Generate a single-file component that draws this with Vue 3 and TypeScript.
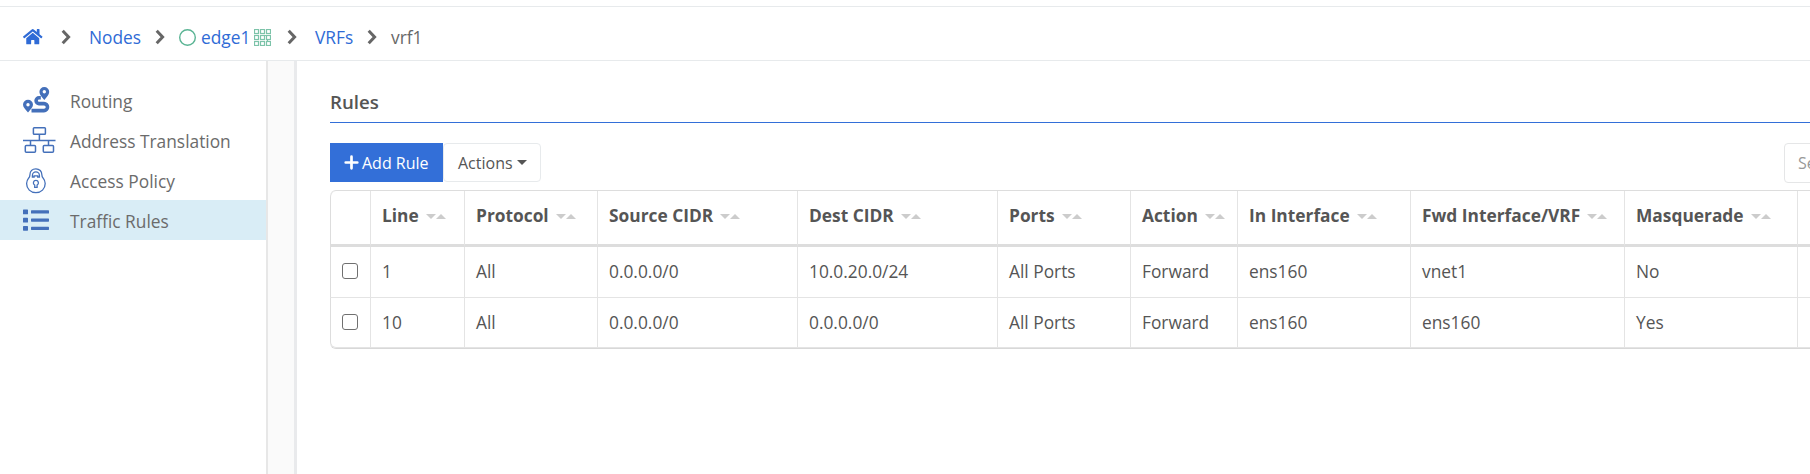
<script setup lang="ts">
interface Rule {
  line: number
  protocol: string
  source: string
  dest: string
  ports: string
  action: string
  inIface: string
  fwd: string
  masq: string
}

const columns: { label: string; cls: string }[] = [
  { label: 'Line', cls: 'w-line' },
  { label: 'Protocol', cls: 'w-protocol' },
  { label: 'Source CIDR', cls: 'w-cidr' },
  { label: 'Dest CIDR', cls: 'w-cidr' },
  { label: 'Ports', cls: 'w-protocol' },
  { label: 'Action', cls: 'w-action' },
  { label: 'In Interface', cls: 'w-iface' },
  { label: 'Fwd Interface/VRF', cls: 'w-fwd' },
  { label: 'Masquerade', cls: 'w-iface' },
]

const rules: Rule[] = [
  { line: 1, protocol: 'All', source: '0.0.0.0/0', dest: '10.0.20.0/24', ports: 'All Ports', action: 'Forward', inIface: 'ens160', fwd: 'vnet1', masq: 'No' },
  { line: 10, protocol: 'All', source: '0.0.0.0/0', dest: '0.0.0.0/0', ports: 'All Ports', action: 'Forward', inIface: 'ens160', fwd: 'ens160', masq: 'Yes' },
]

const menu: { label: string; icon: string; active?: boolean }[] = [
  { label: 'Routing', icon: 'route' },
  { label: 'Address Translation', icon: 'network' },
  { label: 'Access Policy', icon: 'lock' },
  { label: 'Traffic Rules', icon: 'list', active: true },
]

const cells = [0.5, 6.5, 12.5]
</script>

<template>
  <div class="page">
    <nav class="crumbs">
      <a class="crumb home">
        <svg width="19.5" height="17.33" viewBox="0 0 576 512"><path fill="currentColor" d="M280.37 148.26L96 300.11V464a16 16 0 0 0 16 16l112.06-.29a16 16 0 0 0 15.92-16V368a16 16 0 0 1 16-16h64a16 16 0 0 1 16 16v95.64a16 16 0 0 0 16 16.05L464 480a16 16 0 0 0 16-16V300L295.67 148.26a12.19 12.19 0 0 0-15.3 0zM571.6 251.47L488 182.56V44.05a12 12 0 0 0-12-12h-56a12 12 0 0 0-12 12v72.61L318.47 43a48 48 0 0 0-61 0L4.34 251.47a12 12 0 0 0-1.6 16.9l25.5 31A12 12 0 0 0 45.15 301l235.22-193.74a12.19 12.19 0 0 1 15.3 0L530.9 301a12 12 0 0 0 16.9-1.6l25.5-31a12 12 0 0 0-1.7-16.93z" /></svg>
      </a>
      <svg class="chev" viewBox="0 0 10 16"><path d="M1.7 1.8 L7.6 8 L1.7 14.2" /></svg>
      <a class="crumb nodes">Nodes</a>
      <svg class="chev" viewBox="0 0 10 16"><path d="M1.7 1.8 L7.6 8 L1.7 14.2" /></svg>
      <a class="crumb edge">
        <svg class="ring" width="17" height="17" viewBox="0 0 17 17"><circle cx="8.5" cy="8.5" r="7.8" /></svg>
        <span>edge1</span>
        <svg class="matrix" width="17" height="17" viewBox="0 0 17 17">
          <template v-for="y in cells" :key="y">
            <rect v-for="x in cells" :key="x" :x="x" :y="y" width="4" height="4" />
          </template>
          <path d="M11 6.5h2M13.5 11v2" />
        </svg>
      </a>
      <svg class="chev" viewBox="0 0 10 16"><path d="M1.7 1.8 L7.6 8 L1.7 14.2" /></svg>
      <a class="crumb vrfs">VRFs</a>
      <svg class="chev" viewBox="0 0 10 16"><path d="M1.7 1.8 L7.6 8 L1.7 14.2" /></svg>
      <span class="crumb current">vrf1</span>
    </nav>

    <div class="body">
      <aside class="side">
        <a v-for="m in menu" :key="m.label" class="item" :class="{ active: m.active }">
          <span class="icon">
            <svg v-if="m.icon === 'route'" width="27" height="28" viewBox="0 0 27 28">
              <path fill="currentColor" fill-rule="evenodd" d="M21.3 1a4.9 4.9 0 0 1 4.9 4.9c0 2.6-2.7 5.2-4.9 8-2.2-2.8-4.9-5.4-4.9-8A4.9 4.9 0 0 1 21.3 1zm0 3.1a1.7 1.7 0 1 0 0 3.4 1.7 1.7 0 0 0 0-3.4z" />
              <path fill="currentColor" fill-rule="evenodd" d="M5 13.8a5 5 0 0 1 5 5c0 2.600-2.800 5-5 7.600-2.200-2.600-5-5-5-7.600a5 5 0 0 1 5-5zm0 3.200a1.700 1.700 0 1 0 0 3.400 1.700 1.700 0 0 0 0-3.400z" />
              <path fill="none" stroke="currentColor" stroke-width="3.600" d="M17.800 11.800h-1.800a2.900 2.900 0 0 0 0 5.800h5a3.500 3.500 0 0 1 0 7H8.500" />
            </svg>
            <svg v-else-if="m.icon === 'network'" width="33" height="28" viewBox="0 0 33 28" fill="none" stroke="currentColor" stroke-width="1.5">
              <rect x="10.400" y="1.800" width="12" height="6.500" rx=".8" />
              <path d="M16.400 8.300v6.200M0 14.500h32.500M7.500 14.500v5M25.500 14.500v5" />
              <rect x="2.300" y="19.500" width="10.200" height="6.700" rx="1" />
              <rect x="20.300" y="19.500" width="10.200" height="6.700" rx="1" />
            </svg>
            <svg v-else-if="m.icon === 'lock'" width="27" height="28" viewBox="0 0 27 28" fill="none" stroke="currentColor" stroke-width="1.300">
              <g transform="translate(0 1)">
                <path d="M12.900 1.800c-3.600 0-6 2.600-6 6.200 0 1.400-.4 2.300-1.300 3.200a9.300 9.300 0 0 0-2 5.300c0 5.400 4 9.200 9.300 9.200s9.300-3.800 9.300-9.200a9.300 9.300 0 0 0-2-5.300c-.9-.9-1.300-1.800-1.300-3.200 0-3.600-2.400-6.200-6-6.200z" />
                <path d="M9.400 10V8.400a3.500 3.500 0 0 1 7 0V10H14.700V8.900h-3.600V10z" />
                <path d="M12.900 13.400a2.500 2.500 0 0 0-1.200 4.700v2.300h2.400v-2.300a2.500 2.500 0 0 0-1.200-4.700z" />
              </g>
            </svg>
            <svg v-else width="27" height="28" viewBox="0 0 27 28" fill="currentColor">
              <rect y="3.500" width="5" height="4.800" rx=".6" /><rect y="11.700" width="5" height="4.800" rx=".6" /><rect y="19.900" width="5" height="4.800" rx=".6" />
              <rect x="8" y="4.300" width="18" height="3.200" rx=".6" /><rect x="8" y="12.500" width="18" height="3.200" rx=".6" /><rect x="8" y="20.700" width="18" height="3.200" rx=".6" />
            </svg>
          </span>
          <span class="label">{{ m.label }}</span>
        </a>
      </aside>
      <div class="gutter"></div>

      <main class="main">
        <h2 class="title">Rules</h2>
        <div class="toolbar">
          <button class="btn primary">
            <svg width="15" height="15" viewBox="0 0 15 15"><path d="M7.500 1.700v11.600M1.700 7.500h11.600" stroke="currentColor" stroke-width="2.700" stroke-linecap="round" /></svg>
            <span>Add Rule</span>
          </button>
          <button class="btn plain"><span>Actions</span><i class="caret"></i></button>
          <input class="search" type="text" placeholder="Search" />
        </div>

        <table class="grid">
          <colgroup>
            <col class="w-check" />
            <col v-for="c in columns" :key="c.label" :class="c.cls" />
            <col class="w-cidr" />
          </colgroup>
          <thead>
            <tr>
              <th></th>
              <th v-for="c in columns" :key="c.label">
                <div class="head"><span>{{ c.label }}</span><i class="down"></i><i class="up"></i></div>
              </th>
              <th></th>
            </tr>
          </thead>
          <tbody>
            <tr v-for="r in rules" :key="r.line">
              <td class="pick"><span class="box" role="checkbox"></span></td>
              <td>{{ r.line }}</td>
              <td>{{ r.protocol }}</td>
              <td>{{ r.source }}</td>
              <td>{{ r.dest }}</td>
              <td>{{ r.ports }}</td>
              <td>{{ r.action }}</td>
              <td>{{ r.inIface }}</td>
              <td>{{ r.fwd }}</td>
              <td>{{ r.masq }}</td>
              <td></td>
            </tr>
          </tbody>
        </table>
      </main>
    </div>
  </div>
</template>

<style>
body {
  margin: 0;
  background: #fff;
  overflow: hidden;
}
</style>

<style scoped>
.page {
  box-sizing: border-box;
  width: 1810px;
  height: 474px;
  padding-top: 6px;
  overflow: hidden;
  display: flex;
  flex-direction: column;
  font-family: "Open Sans", "Noto Sans", sans-serif;
  font-size: 17.33px;
  line-height: 24px;
  color: #555;
}
.crumbs {
  box-sizing: border-box;
  height: 55px;
  flex: none;
  border-top: 1px solid #e7eaec;
  border-bottom: 1px solid #e7eaec;
  display: flex;
  align-items: center;
  padding: 7px 0 0 23px;
  white-space: nowrap;
}
.crumb {
  flex: none;
  color: #2f6bd6;
}
.home { width: 38px; display: flex; }
.nodes { width: 66px; }
.edge { width: 108px; display: flex; align-items: center; }
.vrfs { width: 52px; }
.current { color: #676767; }
.chev {
  flex: none;
  width: 10px;
  height: 16px;
  margin-right: 18px;
  fill: none;
  stroke: #666;
  stroke-width: 3;
}
.nodes + .chev { margin-right: 14px; }
.edge + .chev { margin-right: 18px; }
.vrfs + .chev { margin-right: 14px; }
.ring {
  margin-right: 5px;
  fill: none;
  stroke: #5ab494;
  stroke-width: 1.4;
}
.matrix {
  margin-left: 4px;
  fill: none;
  stroke: #7cc3a9;
  stroke-width: 1.2;
}
.body {
  flex: 1;
  display: flex;
  min-height: 0;
}
.side {
  width: 266px;
  flex: none;
  padding-top: 19px;
}
.item {
  height: 40px;
  display: flex;
  align-items: center;
  padding-left: 23px;
  color: #6b6b6b;
}
.item.active { background: #d9edf6; }
.label { padding-top: 2px; }
.icon {
  width: 47px;
  height: 28px;
  flex: none;
  color: #4470ba;
}
.icon svg { display: block; }
.gutter {
  box-sizing: border-box;
  width: 31px;
  flex: none;
  background: #fafafa;
  border-left: 2px solid #e7e7e7;
  border-right: 3px solid #e9eaec;
}
.main {
  flex: 1;
  min-width: 0;
  padding-left: 33px;
  overflow: hidden;
}
.title {
  box-sizing: border-box;
  height: 62px;
  margin: 0;
  padding-top: 29px;
  border-bottom: 1px solid #336fd8;
  font-size: 18.67px;
  font-weight: 600;
}
.toolbar {
  display: flex;
  height: 39px;
  margin-top: 20px;
}
.btn {
  box-sizing: border-box;
  flex: none;
  height: 39px;
  margin: 0;
  padding: 0;
  display: flex;
  align-items: center;
  font: inherit;
  font-size: 16px;
  white-space: nowrap;
}
.primary {
  width: 113px;
  border: 0;
  padding-left: 14px;
  gap: 3px;
  background: #336fd8;
  color: #fff;
}
.plain {
  width: 98px;
  padding-left: 14px;
  border: 1px solid #e7eaec;
  border-radius: 4px;
  background: #fff;
  color: #555;
}
.caret {
  margin-left: 4px;
  border: 5px solid transparent;
  border-top-color: #555;
  border-bottom: 0;
}
.search {
  box-sizing: border-box;
  width: 220px;
  height: 40px;
  margin: 0 0 0 1243px;
  padding: 0 13px;
  border: 1px solid #e5e6e7;
  border-radius: 4px;
  font: inherit;
  font-size: 16px;
  flex: none;
}
.search::placeholder { color: #999; }
.grid {
  width: 1667px;
  margin-top: 8px;
  table-layout: fixed;
  border-collapse: separate;
  border-spacing: 0;
  border-top: 1px solid #ddd;
  border-bottom: 1px solid #d8d8d8;
  border-radius: 6px 0 0 6px;
}
.w-check { width: 40px; }
.w-line { width: 94px; }
.w-protocol { width: 133px; }
.w-cidr { width: 200px; }
.w-action { width: 107px; }
.w-iface { width: 173px; }
.w-fwd { width: 214px; }
th, td {
  box-sizing: border-box;
  padding: 0 0 0 11px;
  text-align: left;
  white-space: nowrap;
  border-left: 1px solid #e4e4e4;
}
th {
  height: 56px;
  padding-bottom: 6px;
  border-bottom: 3px solid #ddd;
  font-weight: 700;
}
th:first-child { border-top-left-radius: 6px; border-left-color: #ddd; }
td { height: 51px; padding-bottom: 2px; border-bottom: 1px solid #e4e4e4; }
tr:last-child td { height: 50px; padding-bottom: 1px; }
td:first-child { border-left-color: #ddd; }
tr:last-child td:first-child { border-bottom-left-radius: 6px; }
.head { display: flex; align-items: center; }
.down, .up {
  border: 5px solid transparent;
  margin-top: 3px;
}
.down { margin-left: 7px; border-top-color: #ccc; border-bottom: 0; }
.up { border-bottom-color: #ccc; border-top: 0; }
.box {
  box-sizing: border-box;
  display: block;
  width: 16px;
  height: 16px;
  border: 1px solid #707070;
  border-radius: 3px;
}
</style>
